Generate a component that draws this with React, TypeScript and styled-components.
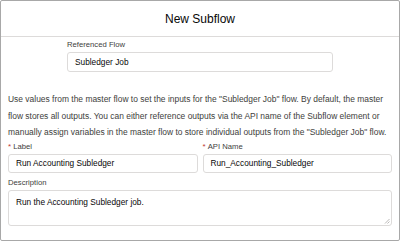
import React from "react";
import styled, { createGlobalStyle } from "styled-components";

const Global = createGlobalStyle`
  html, body { margin: 0; padding: 0; background: #ffffff; }
  body { font-family: "Liberation Sans", Arial, sans-serif; }
  * { box-sizing: border-box; }
`;

const Modal = styled.div`
  width: 400px;
  height: 241px;
  border: 1px solid #a8a8a8;
  border-radius: 2px;
  background: #fff;
  display: flex;
  flex-direction: column;
  overflow: hidden;
`;

const Header = styled.div`
  height: 36px;
  border-bottom: 1px solid #dddbda;
  display: flex;
  align-items: center;
  justify-content: center;
  font-size: 12px;
  color: #080707;
  flex-shrink: 0;
`;

const Body = styled.div`
  padding: 2px 7px 0;
  display: flex;
  flex-direction: column;
`;

const Centered = styled.div`
  width: 266px;
  margin: 0 0 0 59px;
`;

const Field = styled.div<{ $grow?: boolean }>`
  display: flex;
  flex-direction: column;
  flex: ${(p) => (p.$grow ? 1 : "none")};
  min-width: 0;
`;

const Label = styled.label`
  font-size: 7.7px;
  line-height: 12px;
  height: 12px;
  margin-bottom: 1px;
  color: #3e3e3c;
  display: flex;
  align-items: center;
`;

const Req = styled.span`
  color: #c23934;
  margin-right: 2px;
  font-size: 8px;
`;

const Input = styled.div<{ $h?: number }>`
  height: ${(p) => p.$h ?? 20}px;
  border: 1px solid #dddbda;
  border-radius: 3px;
  padding: 0 7px;
  font-size: 8.3px;
  color: #080707;
  display: flex;
  align-items: center;
  white-space: nowrap;
`;

const TextArea = styled.div`
  position: relative;
  height: 36px;
  border: 1px solid #dddbda;
  border-radius: 3px;
  padding: 5px 7px;
  font-size: 8.3px;
  line-height: 12px;
  color: #080707;
`;

const Grip = styled.svg`
  position: absolute;
  right: 1px;
  bottom: 1px;
`;

const Help = styled.p`
  margin: 19px 0 0;
  font-size: 8.45px;
  line-height: 16.5px;
  color: #3e3e3c;
  white-space: nowrap;
`;

const Row = styled.div`
  display: flex;
  gap: 5px;
`;

const Spaced = styled.div`
  margin-top: 4px;
`;

export default function App() {
  return (
    <>
      <Global />
      <Modal>
        <Header>New Subflow</Header>
        <Body>
          <Centered>
            <Field>
              <Label>Referenced Flow</Label>
              <Input>Subledger Job</Input>
            </Field>
          </Centered>
          <Help>
            Use values from the master flow to set the inputs for the "Subledger Job" flow. By default, the master
            <br />
            flow stores all outputs. You can either reference outputs via the API name of the Subflow element or
            <br />
            manually assign variables in the master flow to store individual outputs from the "Subledger Job" flow.
          </Help>
          <Row>
            <Field $grow>
              <Label>
                <Req>*</Req>Label
              </Label>
              <Input $h={19}>Run Accounting Subledger</Input>
            </Field>
            <Field $grow>
              <Label>
                <Req>*</Req>API Name
              </Label>
              <Input $h={19}>Run_Accounting_Subledger</Input>
            </Field>
          </Row>
          <Spaced>
            <Field>
              <Label>Description</Label>
              <TextArea>
                Run the Accounting Subledger job.
                <Grip width="6" height="6" viewBox="0 0 6 6">
                  <path d="M5.5 1 L1 5.5 M5.5 3.5 L3.5 5.5" stroke="#a8a6a4" strokeWidth="0.8" />
                </Grip>
              </TextArea>
            </Field>
          </Spaced>
        </Body>
      </Modal>
    </>
  );
}
